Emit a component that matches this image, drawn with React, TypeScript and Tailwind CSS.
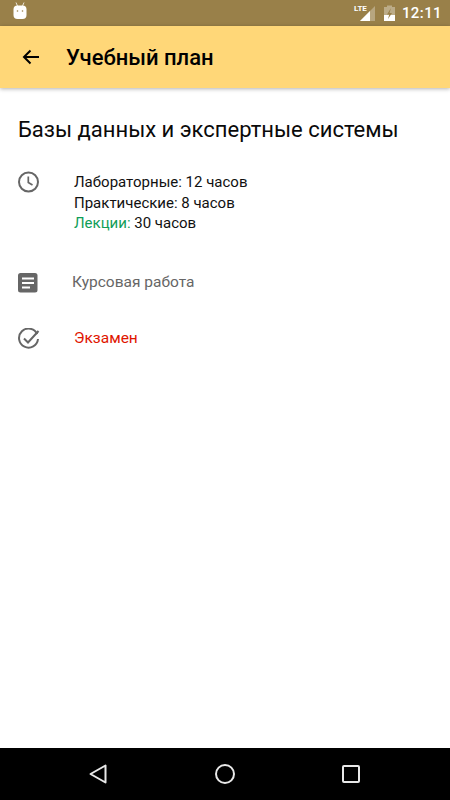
const App = () => {
  return (
    <div className="w-[450px] h-[800px] flex flex-col bg-white overflow-hidden font-['Roboto',sans-serif]">
      {/* status bar */}
      <div className="h-[26px] bg-[#998049] flex items-center justify-between pl-[13px] pr-[8px] shrink-0">
        <svg width="14" height="18" viewBox="0 0 14 18" className="mb-[4px]">
          <path d="M3 0.5 L4.5 4 M11 0.5 L9.5 4" stroke="#fff" strokeWidth="1" opacity="0.8" />
          <rect x="0.5" y="3.5" width="13" height="13.5" rx="4" fill="#fff" />
          <circle cx="4.5" cy="9" r="0.8" fill="#998049" />
          <circle cx="9.5" cy="9" r="0.8" fill="#998049" />
        </svg>
        <div className="flex items-center">
          <div className="relative w-[19px] h-[16px] mr-[9px]">
            <svg width="16" height="16" viewBox="0 0 16 16" className="absolute right-0 top-0">
              <path d="M16 1 V16 H1 Z" fill="#fff" opacity="0.3" />
              <path d="M11 6 V16 H1 Z" fill="#fff" />
            </svg>
            <span className="absolute left-[-2px] top-[-1px] text-[8px] leading-[10px] font-bold text-white">LTE</span>
          </div>
          <svg width="11" height="16" viewBox="0 0 11 16" className="mr-[7px]">
            <path d="M0 2 H3 V0.5 H8 V2 H11 V16 H0 Z" fill="#fff" opacity="0.35" />
            <path d="M0 10 H11 V16 H0 Z" fill="#fff" />
            <path d="M7 3 L3 9.5 H5.2 L4 14 L8 8 H5.5 Z" fill="#998049" />
          </svg>
          <span className="text-[15px] font-medium text-white tracking-[0.4px]">12:11</span>
        </div>
      </div>

      {/* app bar */}
      <div className="h-[62px] bg-[#ffd778] flex items-center shrink-0 shadow-[0_1px_4px_rgba(0,0,0,0.3)] z-10">
        <svg width="18" height="16" viewBox="0 0 18 16" className="ml-[22px]">
          <path d="M17 8 H2 M8.5 1.5 L2 8 L8.5 14.5" fill="none" stroke="#000" strokeWidth="2" />
        </svg>
        <span className="ml-[26px] text-[22px] font-medium text-black">Учебный план</span>
      </div>

      {/* content */}
      <div className="flex-1 flex flex-col pl-[18px]">
        <h1 className="mt-[28px] text-[22px] leading-[28px] text-[#0a0a0a]">Базы данных и экспертные системы</h1>

        <div className="mt-[27px] flex items-start">
          <svg width="22" height="22" viewBox="0 0 22 22">
            <circle cx="10.5" cy="11" r="9.5" fill="none" stroke="#666" strokeWidth="2" />
            <path d="M10.3 5.5 V11.5 L14.5 14" fill="none" stroke="#666" strokeWidth="1.7" />
          </svg>
          <div className="ml-[34px] mt-[1px] text-[15px] leading-[20.5px] text-[#111]">
            <div>Лабораторные: 12 часов</div>
            <div>Практические: 8 часов</div>
            <div>
              <span className="text-[#0f9d58]">Лекции:</span> 30 часов
            </div>
          </div>
        </div>

        <div className="mt-[39px] flex items-center h-[20px]">
          <svg width="20" height="20" viewBox="0 0 20 20">
            <rect width="19.5" height="19.5" rx="2.5" fill="#666" />
            <path d="M4 5.5 H16 M4 10 H16 M4 14.5 H12" stroke="#fff" strokeWidth="2" />
          </svg>
          <span className="ml-[34px] text-[15.5px] text-[#666]">Курсовая работа</span>
        </div>

        <div className="mt-[35px] flex items-center h-[22px]">
          <svg width="22" height="22" viewBox="0 0 22 22">
            <path d="M19.2 6.2 A9.5 9.5 0 1 0 20 11" fill="none" stroke="#666" strokeWidth="2" />
            <path d="M6 10.5 L10 14.5 L20.5 3" fill="none" stroke="#666" strokeWidth="2" />
          </svg>
          <span className="ml-[34px] text-[15.5px] text-[#e01500]">Экзамен</span>
        </div>
      </div>

      {/* nav bar */}
      <div className="h-[52px] bg-black flex items-center shrink-0 pl-[89px]">
        <svg width="18" height="20" viewBox="0 0 18 20">
          <path d="M16.5 1.5 V18.5 L1.5 10 Z" fill="none" stroke="#e8e8e8" strokeWidth="2" strokeLinejoin="round" />
        </svg>
        <svg width="20" height="20" viewBox="0 0 20 20" className="ml-[108px]">
          <circle cx="10" cy="10" r="9" fill="none" stroke="#e8e8e8" strokeWidth="2" />
        </svg>
        <svg width="18" height="18" viewBox="0 0 18 18" className="ml-[107px]">
          <rect x="1" y="1" width="16" height="16" rx="1" fill="none" stroke="#e8e8e8" strokeWidth="2" />
        </svg>
      </div>
    </div>
  );
};

export default App;
